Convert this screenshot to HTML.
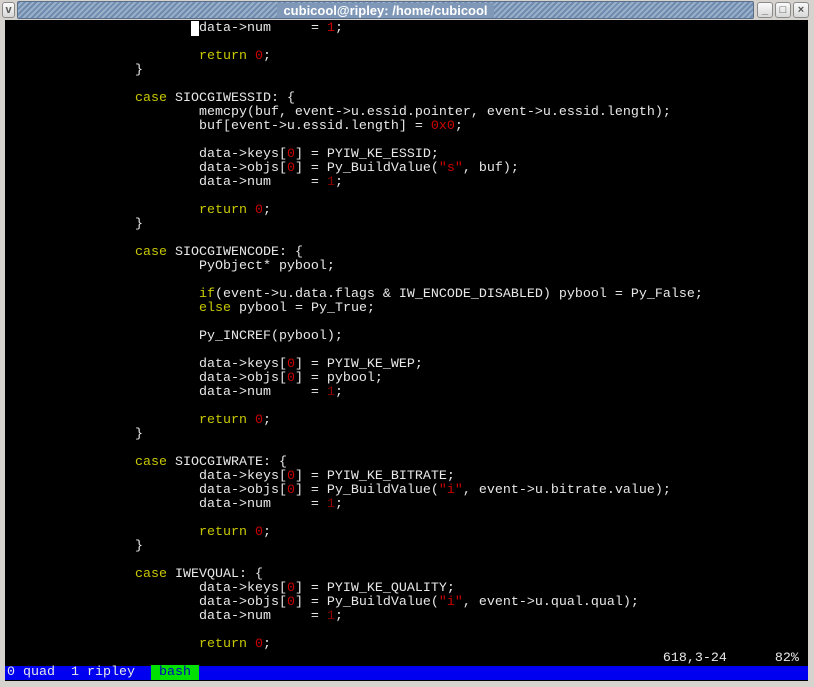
<!DOCTYPE html>
<html><head><meta charset="utf-8"><style>
*{margin:0;padding:0;box-sizing:border-box}
body{width:814px;height:687px;background:#d6d3ce;position:relative;overflow:hidden;font-family:"Liberation Mono",monospace}
#title{position:absolute;left:17px;top:1px;width:737px;height:18px;background:repeating-linear-gradient(135deg,#6f8cb0 0 2px,#9ab0c9 2px 4px);border:1px solid #5a6f8a;border-radius:2px}
#title span{position:absolute;left:0;right:0;top:0;text-align:center;font:bold 13px/17px "Liberation Sans",sans-serif;color:#fff;letter-spacing:0}
#title span b{background:#7f98b8;padding:0 6px;font-weight:bold}
.btn{position:absolute;top:2px;width:16px;height:16px;border:1px solid #8a8a8a;border-radius:3px;background:linear-gradient(#fafafa,#d8d8d8);font:bold 11px/14px "Liberation Sans",sans-serif;color:#555;text-align:center}
#term{position:absolute;left:5px;top:20px;width:803px;height:661px;background:#000}
pre{position:absolute;left:2px;top:2px;font:13.33px/14px "Liberation Mono",monospace;color:#e8e8e8;white-space:pre}
.y{color:#c8c800}.r{color:#cd0000}.d{color:#8b0000}
#bar{position:absolute;left:0;top:646px;width:803px;height:14px;background:#0000f0;font:13.33px/14px "Liberation Mono",monospace;color:#e8e8e8;white-space:pre;padding-left:2px}
#bar i{font-style:normal;background:#00e000;color:#0000c0}
#cur{background:#fff}
</style></head><body>
<div class="btn" style="left:2px;width:13px">v</div>
<div id="title"><span><b>cubicool@ripley: /home/cubicool</b></span></div>
<div class="btn" style="left:757px">_</div>
<div class="btn" style="left:775px">□</div>
<div class="btn" style="left:793px">×</div>
<div id="term"><pre>                       <span id="cur"> </span>data-&gt;num     = <span class="r">1</span>;

                        <span class="y">return</span> <span class="r">0</span>;
                }

                <span class="y">case</span> SIOCGIWESSID: {
                        memcpy(buf, event-&gt;u.essid.pointer, event-&gt;u.essid.length);
                        buf[event-&gt;u.essid.length] = <span class="r">0x0</span>;

                        data-&gt;keys[<span class="r">0</span>] = PYIW_KE_ESSID;
                        data-&gt;objs[<span class="r">0</span>] = Py_BuildValue(<span class="r">"s"</span>, buf);
                        data-&gt;num     = <span class="d">1</span>;

                        <span class="y">return</span> <span class="r">0</span>;
                }

                <span class="y">case</span> SIOCGIWENCODE: {
                        PyObject* pybool;

                        <span class="y">if</span>(event-&gt;u.data.flags &amp; IW_ENCODE_DISABLED) pybool = Py_False;
                        <span class="y">else</span> pybool = Py_True;

                        Py_INCREF(pybool);

                        data-&gt;keys[<span class="r">0</span>] = PYIW_KE_WEP;
                        data-&gt;objs[<span class="r">0</span>] = pybool;
                        data-&gt;num     = <span class="d">1</span>;

                        <span class="y">return</span> <span class="r">0</span>;
                }

                <span class="y">case</span> SIOCGIWRATE: {
                        data-&gt;keys[<span class="r">0</span>] = PYIW_KE_BITRATE;
                        data-&gt;objs[<span class="r">0</span>] = Py_BuildValue(<span class="r">"i"</span>, event-&gt;u.bitrate.value);
                        data-&gt;num     = <span class="d">1</span>;

                        <span class="y">return</span> <span class="r">0</span>;
                }

                <span class="y">case</span> IWEVQUAL: {
                        data-&gt;keys[<span class="r">0</span>] = PYIW_KE_QUALITY;
                        data-&gt;objs[<span class="r">0</span>] = Py_BuildValue(<span class="r">"i"</span>, event-&gt;u.qual.qual);
                        data-&gt;num     = <span class="d">1</span>;

                        <span class="y">return</span> <span class="r">0</span>;
                                                                                  618,3-24      82%</pre>
<div id="bar">0 quad  1 ripley  <i> bash </i></div>
</div>
</body></html>
